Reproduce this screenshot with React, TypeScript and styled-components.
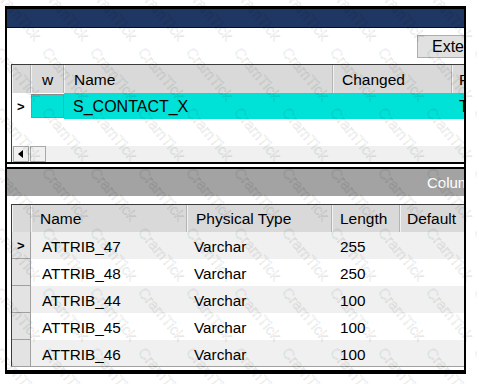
import React from "react";
import styled, { createGlobalStyle } from "styled-components";

const GlobalStyle = createGlobalStyle`
  html, body {
    margin: 0;
    padding: 0;
    background: #ffffff;
  }
  body {
    font-family: "Liberation Sans", Arial, sans-serif;
    color: #000;
  }
`;

const Page = styled.div`
  position: relative;
  width: 477px;
  height: 384px;
  overflow: hidden;
  padding: 6px 0 0 5px;
  box-sizing: border-box;
`;

const Window = styled.div`
  width: 461px;
  height: 368px;
  box-sizing: border-box;
  border-style: solid;
  border-color: #000;
  border-width: 3px 2px 4px 2px;
  background: #fff;
  overflow: hidden;
  display: flex;
  flex-direction: column;
`;

const TitleBar = styled.div`
  height: 18px;
  flex: none;
  background: #1f3763;
  border-bottom: 1px solid #0b0f1a;
`;

const Toolbar = styled.div`
  height: 36px;
  flex: none;
  display: flex;
  justify-content: flex-end;
  align-items: flex-start;
  padding-top: 7px;
  box-sizing: border-box;
`;

const ToolButton = styled.button`
  flex: none;
  width: 92px;
  height: 23px;
  margin-right: -45px;
  padding: 0 0 0 14px;
  text-align: left;
  font-family: inherit;
  font-size: 16px;
  color: #000;
  background: #e1e1e1;
  border: 1px solid #adadad;
`;

const Grid = styled.div<{ $height: number }>`
  flex: none;
  width: 620px;
  height: ${(p) => p.$height}px;
  margin-left: 4px;
  box-sizing: border-box;
  border-top: 1px solid #3c3c3c;
  border-left: 1px solid #3c3c3c;
  display: flex;
  flex-direction: column;
`;

const Row = styled.div<{ $height: number; $bg?: string }>`
  display: flex;
  flex: none;
  height: ${(p) => p.$height}px;
  background: ${(p) => p.$bg || "transparent"};
`;

const HeadCell = styled.div<{ $w: number; $pad?: number; $center?: boolean }>`
  flex: none;
  width: ${(p) => p.$w}px;
  box-sizing: border-box;
  padding-left: ${(p) => p.$pad ?? 8}px;
  padding-top: 1px;
  display: flex;
  align-items: center;
  justify-content: ${(p) => (p.$center ? "center" : "flex-start")};
  background: #d9d9d9;
  border-right: 1px solid #b4b4b4;
  border-left: 1px solid #f2f2f2;
  font-size: 15.5px;
  white-space: nowrap;
`;

const Cell = styled.div<{ $w: number; $pad?: number; $size?: number }>`
  flex: none;
  width: ${(p) => p.$w}px;
  box-sizing: border-box;
  padding-left: ${(p) => p.$pad ?? 8}px;
  padding-top: 2px;
  display: flex;
  align-items: center;
  font-size: ${(p) => p.$size ?? 15.3}px;
  white-space: nowrap;
  overflow: hidden;
`;

const Marker = styled.div<{ $bg?: string; $line?: boolean }>`
  flex: none;
  width: 19px;
  box-sizing: border-box;
  padding-left: 5px;
  display: flex;
  align-items: center;
  font-size: 13px;
  font-weight: bold;
  background: ${(p) => p.$bg || "#fff"};
  border-right: ${(p) => (p.$line ? "1px solid #a0a0a0" : "none")};
  border-bottom: ${(p) => (p.$line ? "1px solid #a0a0a0" : "none")};
`;

const MarkCell = styled.div`
  flex: none;
  width: 33px;
  box-sizing: border-box;
  margin: 1px 0;
  border: 1px solid #8c8c8c;
  background: #00e2d8;
`;

const Filler = styled.div`
  flex: 1;
`;

const ScrollRow = styled.div`
  height: 16px;
  flex: none;
  display: flex;
  gap: 1px;
  padding-left: 1px;
  background: #f0f0f0;
`;

const ScrollBtn = styled.div`
  width: 16px;
  height: 16px;
  box-sizing: border-box;
  border: 1px solid #a8a8a8;
  background: #f0f0f0;
  display: flex;
  align-items: center;
  justify-content: center;
`;

const Divider = styled.div`
  flex: none;
  height: 7px;
  box-sizing: border-box;
  border-top: 2px solid #000;
  border-bottom: 2px solid #000;
`;

const PanelBar = styled.div`
  flex: none;
  height: 27px;
  background: #a3a3a3;
  display: flex;
  justify-content: flex-end;
  align-items: center;
  color: #fff;
  font-size: 15px;
`;

const PanelTitle = styled.span`
  flex: none;
  width: 80px;
  margin-right: -43px;
  white-space: nowrap;
`;

const Gap = styled.div`
  flex: none;
  height: 8px;
`;

const GridBottom = styled.div`
  flex: none;
  height: 1px;
  background: #a0a0a0;
  width: 620px;
  margin-left: 4px;
`;

const Watermark = styled.div`
  position: absolute;
  left: -4px;
  top: -16px;
  display: grid;
  grid-template-columns: repeat(11, 48px);
  grid-auto-rows: 60px;
  pointer-events: none;
`;

const Mark = styled.span`
  display: block;
  transform: rotate(50deg);
  transform-origin: 0 0;
  margin-left: 8px;
  font-size: 15px;
  color: rgba(0, 0, 0, 0.03);
  -webkit-text-stroke: 0.5px rgba(0, 0, 0, 0.15);
  white-space: nowrap;
`;

const columns = [
  { name: "ATTRIB_47", type: "Varchar", length: "255" },
  { name: "ATTRIB_48", type: "Varchar", length: "250" },
  { name: "ATTRIB_44", type: "Varchar", length: "100" },
  { name: "ATTRIB_45", type: "Varchar", length: "100" },
  { name: "ATTRIB_46", type: "Varchar", length: "100" },
];

const LeftArrow = () => (
  <svg width="6" height="8" viewBox="0 0 6 8">
    <path d="M5 0 L0 4 L5 8 Z" fill="#000" />
  </svg>
);

export default function App() {
  return (
    <Page>
      <GlobalStyle />
      <Window>
        <TitleBar />
        <Toolbar>
          <ToolButton>External</ToolButton>
        </Toolbar>

        <Grid $height={98}>
          <Row $height={28}>
            <HeadCell $w={19} />
            <HeadCell $w={33} $pad={0} $center>
              w
            </HeadCell>
            <HeadCell $w={269} $pad={9}>
              Name
            </HeadCell>
            <HeadCell $w={119} $pad={8}>
              Changed
            </HeadCell>
            <HeadCell $w={120} $pad={6}>
              Parent
            </HeadCell>
          </Row>
          <Row $height={26}>
            <Marker>&gt;</Marker>
            <MarkCell />
            <Row $height={26} $bg="#00e2d8">
              <Cell $w={269} $pad={9} $size={16}>
                S_CONTACT_X
              </Cell>
              <Cell $w={119} />
              <Cell $w={120} $pad={7} $size={16}>
                Table
              </Cell>
            </Row>
          </Row>
          <Filler />
          <ScrollRow>
            <ScrollBtn>
              <LeftArrow />
            </ScrollBtn>
            <ScrollBtn />
          </ScrollRow>
        </Grid>

        <Divider />
        <PanelBar>
          <PanelTitle>Columns</PanelTitle>
        </PanelBar>
        <Gap />

        <Grid $height={162}>
          <Row $height={27}>
            <HeadCell $w={19} />
            <HeadCell $w={156} $pad={8}>
              Name
            </HeadCell>
            <HeadCell $w={145} $pad={8}>
              Physical Type
            </HeadCell>
            <HeadCell $w={68} $pad={7}>
              Length
            </HeadCell>
            <HeadCell $w={110} $pad={6}>
              Default
            </HeadCell>
          </Row>
          {columns.map((c, i) => (
            <Row key={c.name} $height={27} $bg={i % 2 === 0 ? "#f0f0f0" : "#ffffff"}>
              <Marker $bg="#e3e3e3" $line>
                {i === 0 ? ">" : ""}
              </Marker>
              <Cell $w={156} $pad={11}>
                {c.name}
              </Cell>
              <Cell $w={145} $pad={7}>
                {c.type}
              </Cell>
              <Cell $w={68} $pad={8}>
                {c.length}
              </Cell>
              <Cell $w={110} />
            </Row>
          ))}
        </Grid>
        <GridBottom />
      </Window>

      <Watermark>
        {Array.from({ length: 11 * 7 }).map((_, i) => (
          <Mark key={i}>CramTick</Mark>
        ))}
      </Watermark>
    </Page>
  );
}
